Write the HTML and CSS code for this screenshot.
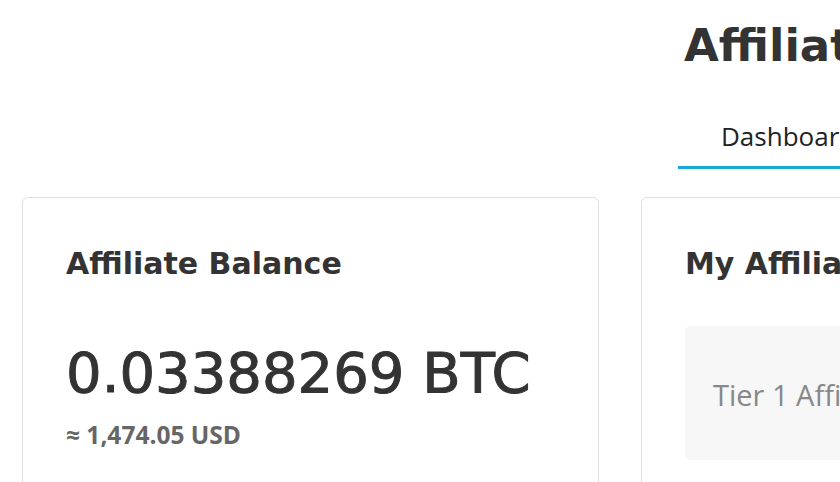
FILE: index.html
```html
<!DOCTYPE html>
<html lang="en">
<head>
<meta charset="utf-8">
<title>Affiliate</title>
<link rel="stylesheet" href="styles.css">
</head>
<body>
<div class="page">
  <div class="spacer"></div>
  <header class="head">
    <h1 class="title">Affiliate Program</h1>
    <nav class="tabs">
      <a class="tab active">Dashboard</a>
      <a class="tab">Referrals</a>
    </nav>
  </header>
  <section class="card">
    <h2 class="card-title">Affiliate Balance</h2>
    <div class="amount">0.03388269 BTC</div>
    <div class="usd">≈ 1,474.05 USD</div>
  </section>
  <section class="card">
    <h2 class="card-title">My Affiliates</h2>
    <div class="tier">Tier 1 Affiliates</div>
  </section>
</div>
</body>
</html>
```
FILE: styles.css
```css
html, body {
  margin: 0;
  padding: 0;
  background: #fff;
  overflow: hidden;
  width: 840px;
  height: 482px;
}
.page {
  display: grid;
  grid-template-columns: 577px 577px;
  column-gap: 42px;
  padding-left: 22px;
  width: 1300px;
  font-family: "Open Sans", sans-serif;
  color: #333;
}
.head {
  padding-left: 37px;
}
.title {
  margin: 0;
  padding-top: 18px;
  padding-left: 6px;
  font-family: "DejaVu Sans", sans-serif;
  font-weight: 700;
  font-size: 45px;
  line-height: 56px;
  color: #333;
}
.tabs {
  display: flex;
  margin-top: 44px;
}
.tab {
  display: block;
  padding: 0 43px 12px;
  font-size: 26px;
  line-height: 36px;
  color: #222;
  border-bottom: 3px solid transparent;
}
.tab.active {
  border-bottom-color: #18a8db;
}
.card {
  margin-top: 28px;
  height: 320px;
  border: 1px solid #ddd;
  border-radius: 6px;
  padding: 46px 43px 43px;
}
.card-title {
  margin: 0;
  font-family: "DejaVu Sans", sans-serif;
  font-weight: 700;
  font-size: 30px;
  line-height: 40px;
  color: #333;
}
.amount {
  margin-top: 57px;
  font-family: "DejaVu Sans", sans-serif;
  font-weight: 400;
  font-size: 56px;
  line-height: 64px;
  color: #333;
  -webkit-text-stroke: 1px #333;
}
.usd {
  margin-top: 14px;
  font-weight: 700;
  font-size: 24.5px;
  line-height: 32px;
  color: #666;
}
.tier {
  margin-top: 42px;
  height: 134px;
  box-sizing: border-box;
  background: #f7f7f7;
  border-radius: 5px;
  padding: 49px 28px 0;
  font-size: 29px;
  line-height: 40px;
  color: #888;
}
```
